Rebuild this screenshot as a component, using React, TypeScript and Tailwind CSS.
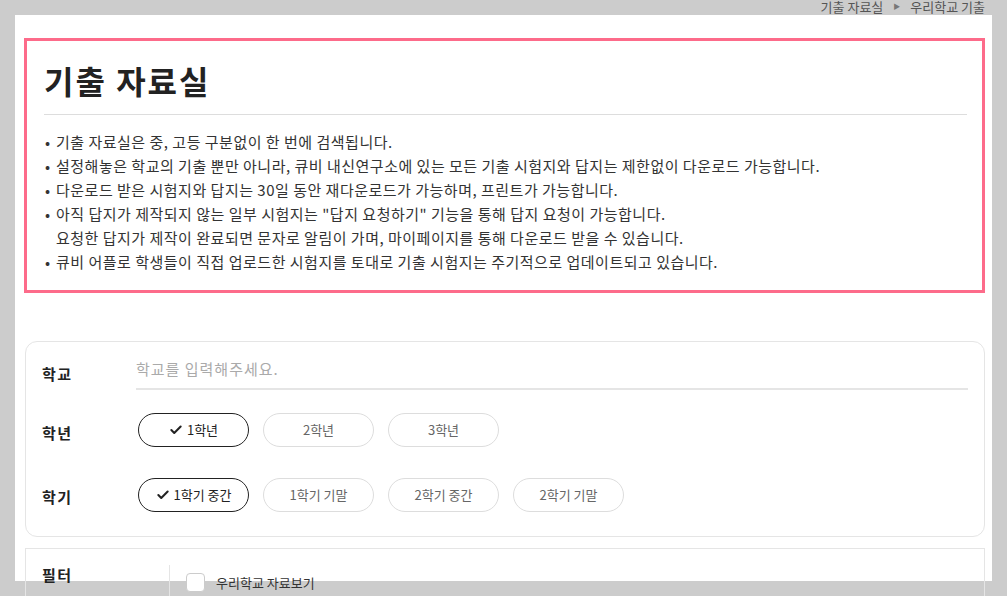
import React from "react";
import { Check } from "lucide-react";

const FONT = { fontFamily: '"Noto Sans CJK KR", "Noto Sans", sans-serif' };

function Pill({ label, selected }: { label: string; selected?: boolean }) {
  return (
    <div
      className={
        selected
          ? "w-[111px] h-[34px] rounded-full border border-[#222222] flex items-center justify-center gap-[4px] text-[13px] text-[#222222]"
          : "w-[111px] h-[34px] rounded-full border border-[#dddddd] flex items-center justify-center text-[13px] text-[#666666]"
      }
    >
      {selected && <Check size={14} strokeWidth={3.5} />}
      <span>{label}</span>
    </div>
  );
}

const bullets: string[][] = [
  ["기출 자료실은 중, 고등 구분없이 한 번에 검색됩니다."],
  ["설정해놓은 학교의 기출 뿐만 아니라, 큐비 내신연구소에 있는 모든 기출 시험지와 답지는 제한없이 다운로드 가능합니다."],
  ["다운로드 받은 시험지와 답지는 30일 동안 재다운로드가 가능하며, 프린트가 가능합니다."],
  [
    "아직 답지가 제작되지 않는 일부 시험지는 \"답지 요청하기\" 기능을 통해 답지 요청이 가능합니다.",
    "요청한 답지가 제작이 완료되면 문자로 알림이 가며, 마이페이지를 통해 다운로드 받을 수 있습니다.",
  ],
  ["큐비 어플로 학생들이 직접 업로드한 시험지를 토대로 기출 시험지는 주기적으로 업데이트되고 있습니다."],
];

export default function App() {
  return (
    <div className="h-[596px] overflow-hidden bg-[#cccccc]" style={FONT}>
      <div className="h-[15px] flex justify-end items-start pr-[22px] text-[13px] leading-[13px] text-[#555555]">
        <span>기출 자료실</span>
        <span className="mx-[10px] text-[7px] leading-[13px] text-[#777777]">▶</span>
        <span>우리학교 기출</span>
      </div>
      <div className="ml-[15px] w-[977px] h-[566px] bg-white pt-[23px]">
        <div className="ml-[9px] w-[961px] border-[3px] border-[#fd6b8a] pt-[19px] pl-[17px] pr-[15px] pb-[16px]">
          <h1 className="text-[32px] leading-[40px] font-bold tracking-[2px] text-[#222222]">기출 자료실</h1>
          <div className="mt-[14px] h-px bg-[#dddddd]" />
          <div className="mt-[15px] text-[15px] leading-[24px] tracking-[0.5px] text-[#333333]">
            {bullets.map((lines, i) => (
              <div key={i}>
                {lines.map((t, j) => (
                  <div key={j} className="flex">
                    <span className="w-[12px] shrink-0 pl-[1px] tracking-normal">{j === 0 ? "•" : ""}</span>
                    <span>{t}</span>
                  </div>
                ))}
              </div>
            ))}
          </div>
        </div>

        <div className="ml-[10px] w-[960px] mt-[48px] rounded-xl border border-[#e5e5e5] pt-[8px] pl-[16px] pr-[16px] pb-[24px]">
          <div className="flex items-center">
            <div className="w-[94px] mt-[8px] text-[15px] font-bold tracking-[1.5px] text-[#222222]">학교</div>
            <div className="flex-1 h-[40px] border-b-2 border-[#e5e5e5] flex items-center text-[15px] tracking-[1px] text-[#aaaaaa]">
              학교를 입력해주세요.
            </div>
          </div>
          <div className="flex items-center mt-[23px]">
            <div className="w-[96px] mt-[6px] text-[15px] font-bold tracking-[1.5px] text-[#222222]">학년</div>
            <div className="flex gap-[14px]">
              <Pill label="1학년" selected />
              <Pill label="2학년" />
              <Pill label="3학년" />
            </div>
          </div>
          <div className="flex items-center mt-[31px]">
            <div className="w-[96px] mt-[4px] text-[15px] font-bold tracking-[1.5px] text-[#222222]">학기</div>
            <div className="flex gap-[14px]">
              <Pill label="1학기 중간" selected />
              <Pill label="1학기 기말" />
              <Pill label="2학기 중간" />
              <Pill label="2학기 기말" />
            </div>
          </div>
        </div>

        <div className="ml-[10px] w-[960px] mt-[11px] h-[80px] border border-[#e5e5e5] flex">
          <div className="w-[143px] pl-[16px] pt-[15px] text-[15px] font-bold tracking-[1.5px] text-[#222222]">필터</div>
          <div className="mt-[16px] border-l border-[#e5e5e5] pl-[16px] pt-[8px] flex gap-[11px] items-start">
            <div className="w-[19px] h-[19px] rounded-[4px] border border-[#cccccc] bg-white" />
            <span className="text-[13px] leading-[19px] text-[#333333]">우리학교 자료보기</span>
          </div>
        </div>
      </div>
    </div>
  );
}
